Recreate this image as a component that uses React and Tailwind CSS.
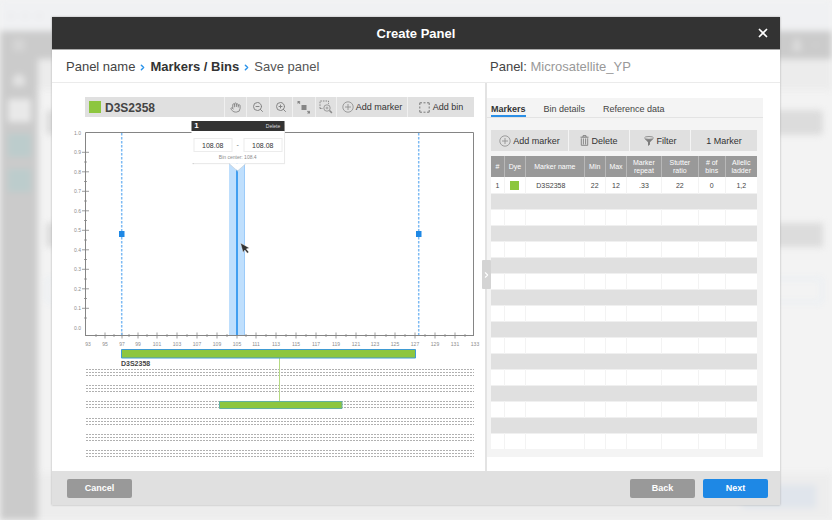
import React, { useState } from 'react';
import { Hand, ZoomIn, ZoomOut, X, ChevronRight, User, Menu, House } from 'lucide-react';

const Y_LABELS = ['1.0', '0.9', '0.8', '0.7', '0.6', '0.5', '0.4', '0.3', '0.2', '0.1', '0.0'];

const X_LABELS = [
    ['93', 88], ['95', 105], ['97', 122], ['99', 138], ['101', 157], ['103', 177], ['107', 197],
    ['109', 217], ['105', 237], ['111', 256], ['113', 276], ['115', 296], ['117', 316], ['119', 336],
    ['121', 356], ['123', 375], ['125', 395], ['127', 415], ['129', 435], ['131', 455], ['133', 475],
];

const X_MINOR = [96, 114, 129, 147, 167, 187, 207, 227, 246, 266, 286, 306, 326, 346, 366, 386, 405, 425, 445, 465];

const COLUMNS = [
    { label: '#', width: 'w-[5%]' },
    { label: 'Dye', width: 'w-[8%]' },
    { label: 'Marker name', width: 'w-[22%]' },
    { label: 'Min', width: 'w-[8%]' },
    { label: 'Max', width: 'w-[8%]' },
    { label: 'Marker repeat', width: 'w-[13%]' },
    { label: 'Stutter ratio', width: 'w-[14%]' },
    { label: '# of bins', width: 'w-[10%]' },
    { label: 'Allelic ladder', width: 'w-[12%]' },
];

const TABS = ['Markers', 'Bin details', 'Reference data'];

const CirclePlusIcon = () => (
    <svg width="12" height="12" viewBox="0 0 12 12" fill="none" stroke="#8a8a8a" strokeWidth="0.8">
        <circle cx="6" cy="6" r="5.2" />
        <path d="M6 3v6M3 6h6" />
    </svg>
);

const FitIcon = () => (
    <svg width="14" height="14" viewBox="0 0 14 14" fill="#858585">
        <path d="M4.500 5h5v5h-5z" />
        <path d="M.5 1h3L2.500 2l1 1-1 1-1-1-1 1z" />
        <path d="M13 13.500h-3l1-1-1-1 1-1 1 1 1-1z" />
    </svg>
);

const ZoomAreaIcon = () => (
    <svg width="14" height="14" viewBox="0 0 14 14" fill="none" stroke="#8a8a8a">
        <path d="M1 8.5V1h8.5v3M1 8.5h3" strokeDasharray="1.6 1" />
        <circle cx="8" cy="8" r="3.2" fill="#e0e0e0" strokeWidth="0.8" />
        <path d="M6.6 8h2.8M8 6.6v2.8" strokeWidth="0.7" />
        <path d="M10.5 10.5l2.4 2.4" strokeWidth="1.5" />
    </svg>
);

const AddBinIcon = () => (
    <svg width="11" height="11" viewBox="0 0 11 11" fill="none" stroke="#7a7a7a">
        <path d="M.8 3V.8H3M4.5.8h2M8 .8h2.2V3M10.2 4.5v2M10.2 8v2.2H8M6.5 10.2h-2M3 10.2H.8V8M.8 6.5v-2" />
    </svg>
);

const TrashIcon = () => (
    <svg width="9" height="11" viewBox="0 0 9 11" fill="none" stroke="#7d7d7d">
        <path d="M.5 2.2h8M3 2V.7h3V2" />
        <path d="M1.3 3.3v7h6.4v-7M3.4 3.5v6M5.6 3.5v6" strokeWidth="0.9" />
    </svg>
);

const FunnelIcon = () => (
    <svg width="10" height="10" viewBox="0 0 10 10">
        <path d="M.5 2.4L4 6.2V10l2-1.4V6.2l3.5-3.8z" fill="#7d7d7d" />
        <ellipse cx="5" cy="1.9" rx="4.4" ry="1.4" fill="#e0e0e0" stroke="#7d7d7d" strokeWidth="0.8" />
    </svg>
);

const ToolButton = ({ label, className, children }) => (
    <button aria-label={label} className={`flex items-center justify-center bg-[#e0e0e0] text-[#858585] ${className}`}>
        {children}
    </button>
);

// page behind the dialog
const Backdrop = () => (
    <div aria-hidden="true" className="absolute inset-0 overflow-hidden bg-[#f3f3f3]">
        <div className="flex h-full flex-col blur-[3px]">
            <div className="flex h-[31px] shrink-0 items-center gap-2 bg-[#f0f1f3] px-2">
                <span className="size-[6px] rounded-full bg-[#ebebed]" />
                <span className="size-[6px] rounded-full bg-[#ebebed]" />
                <span className="size-[6px] rounded-full bg-[#ebebed]" />
            </div>
            <div className="flex h-[28px] shrink-0 items-center justify-between bg-[#cbcbcb] pl-3 pr-3 text-[#e4e4e4]">
                <Menu size={14} strokeWidth={3} />
                <div className="flex items-center gap-2">
                    <User size={14} fill="#e4e4e4" />
                    <ChevronRight size={8} className="rotate-90" />
                </div>
            </div>
            <div className="flex flex-1">
                <div className="flex w-[38px] shrink-0 flex-col items-center gap-3 bg-[#cbcbcb] pt-[14px]">
                    <House size={14} className="text-[#e4e4e4]" fill="#e4e4e4" />
                    <span className="size-[23px] bg-[#e9e9e9]" />
                    <span className="size-[23px] bg-[#bccccc]" />
                    <span className="size-[23px] bg-[#bccccc]" />
                </div>
                <div className="flex flex-1 flex-col">
                    <div className="h-[31px] shrink-0 bg-[#ececec]" />
                    <div className="flex flex-1 flex-col pl-[8px] pr-[9px] pt-[20px]">
                        <div className="h-[25px] rounded-sm bg-[#dcdcdc]" />
                        <div className="mt-[88px] h-[24px] bg-[#dcdcdc]" />
                        <div className="mt-[31px] h-[25px] rounded-sm border-2 border-[#e6edf4]" />
                    </div>
                    <div className="flex h-[47px] shrink-0 items-center justify-end bg-[#ededed] pr-4">
                        <span className="h-[23px] w-[74px] bg-[#e0e5ec]" />
                    </div>
                </div>
            </div>
        </div>
    </div>
);

const DotRows = ({ y }) => (
    <g stroke="#b0b0b0" strokeWidth="1" strokeDasharray="2 1">
        <path d={`M86 ${y}H474M86 ${y + 3}H474M86 ${y + 6}H474`} />
    </g>
);

const Chart = () => (
    <svg viewBox="66 117 414 346" className="block h-auto w-full" fontFamily="Liberation Sans, Arial, sans-serif">
        <path d="M85.5 336V132.5H473.5V336" fill="none" stroke="#858585" />
        <path d="M85 335.5H474" stroke="#858585" />

        <g stroke="#858585">
            {Y_LABELS.slice(1, 10).map((label, i) => (
                <path key={label} d={`M82 ${152.3 + i * 19.5}h7`} strokeWidth="0.8" />
            ))}
            {Y_LABELS.slice(1, 10).map((label, i) => (
                <path key={label} d={`M84 ${162 + i * 19.5}h3`} strokeWidth="0.8" />
            ))}
            {X_LABELS.slice(1, 20).map(([label, x]) => (
                <path key={label} d={`M${x} 332.5v6`} strokeWidth="0.8" />
            ))}
            {X_MINOR.map((x) => (
                <path key={x} d={`M${x} 334v3`} strokeWidth="0.8" />
            ))}
        </g>

        <g fontSize="5" fill="#8c8c8c">
            {Y_LABELS.map((label, i) => (
                <text key={label} x="81" y={134.5 + i * 19.5} textAnchor="end">{label}</text>
            ))}
            {X_LABELS.map(([label, x]) => (
                <text key={label} x={x} y="346" textAnchor="middle">{label}</text>
            ))}
        </g>

        <path d="M121.7 133V335M418.7 133V335" stroke="#7dbaf3" strokeWidth="1.5" strokeDasharray="2.4 1.6" />
        <path d="M119 231h5.5v6H119zM416 231h5.5v6H416z" fill="#1e88e5" />

        <path d="M229 160h16v175h-16z" fill="#bfdffd" />
        <path d="M244.5 160V335" stroke="#9ccbf9" />
        <path d="M237 160V335" stroke="#419ef0" strokeWidth="2" />

        {[369.5, 385.5, 401.5, 418.5, 434.5, 450.5].map((y) => (
            <DotRows key={y} y={y} />
        ))}
        <path d="M279.5 358V402" stroke="#b5d983" />
        <path d="M121.5 349.5h294v8.5h-294z" fill="#8dc63f" stroke="#3f9bd3" />
        <path d="M219.5 401.5h122.5v7h-122.5z" fill="#8dc63f" stroke="#62b0a0" />
        <text x="121" y="366" fontSize="7" fontWeight="bold" fill="#444">D3S2358</text>

        <path d="M240.5 243l2.6 9.5 1.7-2.5 2.6 3.2 1.4-1.200-2.500-3.100 3-1z" fill="#333" stroke="#fff" strokeWidth="0.4" />
    </svg>
);

const BinPopup = () => (
    <div className="absolute left-[calc(41%+2px)] top-[4px] w-[93px] -translate-x-1/2 bg-white shadow-[0_1px_1px_#d4d4d4]">
        <div className="flex h-[10px] items-center justify-between bg-[#333] pl-[3px] pr-1 text-white">
            <span className="text-[8px] leading-[10px] font-bold">1</span>
            <button className="text-[5px] leading-[10px] text-[#ddd]">Delete</button>
        </div>
        <div className="flex items-center justify-between px-[2px] pt-[7px]">
            <input
                aria-label="Bin start"
                defaultValue="108.08"
                className="h-[14px] w-[39px] border border-[#ececec] text-center text-[7px] text-[#333]"
            />
            <span className="text-[7px] leading-[8px] text-[#777]">-</span>
            <input
                aria-label="Bin end"
                defaultValue="108.08"
                className="h-[14px] w-[39px] border border-[#ececec] text-center text-[7px] text-[#333]"
            />
        </div>
        <p className="text-center text-[5px] leading-[11px] text-[#8c8c8c]">Bin center: 108.4</p>
        <svg className="absolute left-1/2 top-full -translate-x-1/2" width="17" height="9" viewBox="0 0 18 9">
            <path d="M0 0l9 8 9-8z" fill="#fff" />
            <path d="M0 .3l9 8 9-8" fill="none" stroke="#d0d0d0" strokeWidth="0.6" />
        </svg>
    </div>
);

const MarkerTable = () => (
    <table className="mt-[5px] w-full table-fixed border-collapse text-center text-[7px] text-[#444]">
        <thead>
            <tr className="h-[21px] bg-[#999] text-white">
                {COLUMNS.map(({ label, width }) => (
                    <th key={label} className={`${width} border-l border-[#b8b8b8] px-px leading-[8px] font-normal first:border-l-0`}>
                        {label}
                    </th>
                ))}
            </tr>
        </thead>
        <tbody>
            <tr className="h-[16px] bg-white">
                {['1', 'dye', 'D3S2358', '22', '12', '.33', '22', '0', '1,2'].map((value, i) => (
                    <td
                        key={i}
                        className={`border-l border-[#f3f3f3] pt-[2px] leading-[8px] first:border-l-0 ${i === 2 ? 'pr-[8px]' : ''}`}
                    >
                        {value === 'dye' ? <span className="mx-auto block size-[9px] bg-[#8dc63f]" /> : value}
                    </td>
                ))}
            </tr>
            {Array.from({ length: 16 }, (_, row) => (
                <tr key={row} className={row % 2 === 0 ? 'h-[16px] border-y border-[#f0f0f0] bg-[#e0e0e0]' : 'h-[16px] bg-white'}>
                    {COLUMNS.map(({ label }) => (
                        <td key={label} className={row % 2 === 0 ? '' : 'border-l border-[#f3f3f3] first:border-l-0'} />
                    ))}
                </tr>
            ))}
        </tbody>
    </table>
);

const App = () => {
    const [tab, setTab] = useState('Markers');

    return (
        <div className="relative min-h-screen px-[52px] pt-[17px] pb-[15px] font-['Liberation_Sans',Arial,sans-serif]">
            <Backdrop />
            <div role="dialog" aria-labelledby="dialog-title" className="relative bg-white shadow-[0_0_2px_#aaa]">
                <header className="grid h-[33px] grid-cols-[1fr_auto_1fr] items-center border-b border-[#aaa] bg-[#333] px-[10px] text-white">
                    <h1 id="dialog-title" className="col-start-2 pt-[2px] text-[13px] leading-[16px] font-bold">Create Panel</h1>
                    <button aria-label="Close" className="justify-self-end">
                        <X size={14} strokeWidth={3} />
                    </button>
                </header>

                <div className="grid h-[33px] grid-cols-[438fr_290fr] items-center border-b border-[#ebebeb] pt-[2px] text-[13px] leading-[16px]">
                    <nav className="flex items-center gap-[3px] pl-[14px] text-[#444]">
                        <a href="#name">Panel name</a>
                        <ChevronRight size={9} strokeWidth={4} className="mt-px text-[#2b93ea]" />
                        <a href="#markers" className="font-bold text-[#333]">Markers / Bins</a>
                        <ChevronRight size={9} strokeWidth={4} className="mt-px text-[#2b93ea]" />
                        <a href="#save" className="text-[#555]">Save panel</a>
                    </nav>
                    <p className="text-[#444]">Panel: <span className="text-[#999]">Microsatellite_YP</span></p>
                </div>

                <div className="grid grid-cols-[433fr_295fr]">
                    <section className="pl-[14px] pr-[5px] pt-[14px]">
                        <div className="ml-[19px] mr-[6px] flex h-[20px] gap-px bg-[#f0f0f0] text-[9px] leading-[12px]">
                            <div className="flex flex-1 items-center gap-1 bg-[#e0e0e0] pl-1">
                                <span className="size-[12px] bg-[#8dc63f]" />
                                <h2 className="pt-px text-[12px] leading-[16px] font-bold text-[#444]">D3S2358</h2>
                            </div>
                            <ToolButton label="Pan" className="w-[21px]"><Hand size={11} strokeWidth={2} /></ToolButton>
                            <ToolButton label="Zoom out" className="w-[22px]"><ZoomOut size={12} strokeWidth={2} /></ToolButton>
                            <ToolButton label="Zoom in" className="w-[22px]"><ZoomIn size={12} strokeWidth={2} /></ToolButton>
                            <ToolButton label="Fit" className="w-[22px]"><FitIcon /></ToolButton>
                            <ToolButton label="Zoom to area" className="w-[20px]"><ZoomAreaIcon /></ToolButton>
                            <button className="flex w-[70px] items-center justify-center gap-[2px] bg-[#e0e0e0] whitespace-nowrap text-[#333]">
                                <CirclePlusIcon /> Add marker
                            </button>
                            <button className="flex w-[66px] items-center justify-center gap-[3px] bg-[#e0e0e0] whitespace-nowrap text-[#333]">
                                <AddBinIcon /> Add bin
                            </button>
                        </div>
                        <div className="relative">
                            <Chart />
                            <BinPopup />
                        </div>
                    </section>

                    <section className="relative border-l-2 border-[#e3e3e3] pt-[15px] pr-[17px] pb-[14px]">
                        <button
                            aria-label="Collapse panel"
                            className="absolute -left-[5px] top-[177px] flex h-[29px] w-[9px] items-center justify-center rounded-[1px] bg-[#d4d4d4] text-white"
                        >
                            <ChevronRight size={10} strokeWidth={3} />
                        </button>
                        <div className="bg-[#f4f4f4] pb-2">
                            <div role="tablist" className="flex h-[20px] items-end gap-[18px] border-b border-[#e3e3e3] pl-1 text-[9px] leading-[12px]">
                                {TABS.map((name) => (
                                    <button
                                        key={name}
                                        role="tab"
                                        aria-selected={tab === name}
                                        onClick={() => setTab(name)}
                                        className={tab === name
                                            ? 'border-b-2 border-[#2b8fe6] font-bold text-[#333]'
                                            : 'border-b-2 border-transparent text-[#444]'}
                                    >
                                        {name}
                                    </button>
                                ))}
                            </div>
                            <div className="pt-[12px] pl-1 pr-[6px]">
                                <div className="grid h-[21px] grid-cols-[77fr_60fr_60fr_66fr] gap-px text-[9px] leading-[12px] text-[#333]">
                                    <button className="flex items-center justify-center gap-[2px] bg-[#e0e0e0] whitespace-nowrap">
                                        <CirclePlusIcon /> Add marker
                                    </button>
                                    <button className="flex items-center justify-center gap-[2px] bg-[#e0e0e0]">
                                        <TrashIcon /> Delete
                                    </button>
                                    <button className="flex items-center justify-center gap-[3px] bg-[#e0e0e0]">
                                        <FunnelIcon /> Filter
                                    </button>
                                    <span className="flex items-center justify-center bg-[#e0e0e0]">1 Marker</span>
                                </div>
                                <MarkerTable />
                            </div>
                        </div>
                    </section>
                </div>

                <footer className="flex h-[34px] items-center bg-[#e0e0e0] pr-[12px] pl-[15px] text-[9px] leading-[12px] font-bold text-white">
                    <button className="h-[19px] w-[65px] rounded-[2px] bg-[#999]">Cancel</button>
                    <button className="mr-2 ml-auto h-[19px] w-[65px] rounded-[2px] bg-[#999]">Back</button>
                    <button className="h-[19px] w-[65px] rounded-[2px] bg-[#1e88e5]">Next</button>
                </footer>
            </div>
        </div>
    );
};

export default App;
